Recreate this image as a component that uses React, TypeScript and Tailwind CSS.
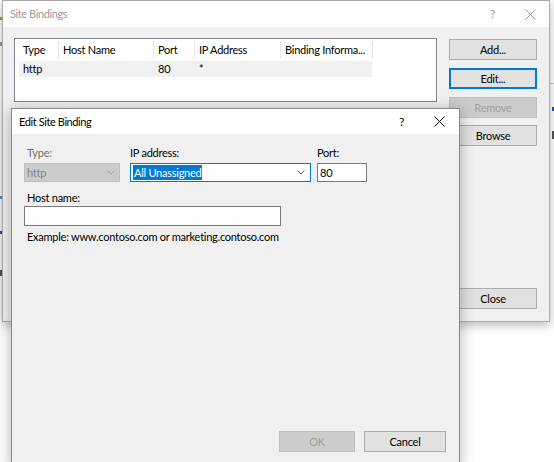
import React from "react";

function CloseX({ color }: { color: string }) {
  return (
    <svg width="11" height="11" viewBox="0 0 11 11" fill="none">
      <path d="M0.5 0.5 L10.5 10.5 M10.5 0.5 L0.5 10.5" stroke={color} strokeWidth="1" />
    </svg>
  );
}

function Chevron({ color }: { color: string }) {
  return (
    <svg width="8" height="5" viewBox="0 0 8 5" fill="none">
      <path d="M0.5 0.5 L4 4 L7.5 0.5" stroke={color} strokeWidth="1" />
    </svg>
  );
}

function WinButton({ label, variant = "normal", className = "" }: { label: string; variant?: "normal" | "default" | "disabled"; className?: string }) {
  const look =
    variant === "disabled"
      ? "bg-[#cccccc] border-[#bfbfbf] text-[#a0a0a0]"
      : variant === "default"
      ? "bg-[#e1e1e1] border-[#0078d7] shadow-[inset_0_0_0_1px_#0078d7] text-black"
      : "bg-[#e1e1e1] border-[#adadad] text-black";
  return (
    <div className={`h-[21px] flex items-center justify-center border ${look} ${className}`}>
      {label}
    </div>
  );
}

const columns = [
  { label: "Type", w: "w-[39px]" },
  { label: "Host Name", w: "w-[94px]" },
  { label: "Port", w: "w-[40px]" },
  { label: "IP Address", w: "w-[85px]" },
  { label: "Binding Informa...", w: "w-[91px]" },
];

const row = ["http", "", "80", "*", ""];

export default function App() {
  return (
    <div className="relative w-[554px] h-[462px] overflow-hidden bg-white text-[11px] leading-[14px] tracking-[-0.25px] text-black font-['Segoe_UI','Lato',sans-serif]">
      {/* bits of windows lying further behind */}
      <div className="absolute left-0 top-[17px] w-[2px] h-[3px] bg-[#d9822b]" />
      <div className="absolute left-0 top-[42px] w-[2px] h-[4px] bg-[#9a9a9a]" />
      <div className="absolute left-0 top-[196px] w-[2px] h-[3px] bg-[#5a8fc0]" />
      <div className="absolute left-0 top-[231px] w-[2px] h-[3px] bg-[#2a4f9a]" />
      <div className="absolute left-0 top-[270px] w-[2px] h-[6px] bg-[#555555]" />
      <div className="absolute left-[550px] top-[83px] w-[4px] h-px bg-[#c8c8c8]" />
      <div className="absolute left-[552px] top-[107px] w-[2px] h-[4px] bg-[#2a4f9a]" />
      <div className="absolute left-[552px] top-[131px] w-[2px] h-[8px] bg-[#555555]" />

      {/* Site Bindings (inactive) */}
      <div className="absolute left-[2px] top-0 w-[548px] h-[322px] flex flex-col bg-[#f0f0f0] border border-[#aaaaaa] shadow-[0_3px_10px_rgba(0,0,0,0.28)]">
        <div className="h-[26px] shrink-0 bg-white flex items-center pl-[7px] pr-[13px]">
          <span className="text-[#9a9a9a] text-[11px] tracking-[-0.4px]">Site Bindings</span>
          <span className="ml-auto text-[#9a9a9a] text-[12px] mr-[30px]">?</span>
          <CloseX color="#9a9a9a" />
        </div>
        <div className="flex-1 flex pl-[11px] pt-[11px] pb-[12px] gap-[12px]">
          <div className="w-[423px] h-[64px] bg-white border border-[#828790] pl-[4px] pt-[2px]">
            <div className="flex h-[18px] gap-px">
              {columns.map((c) => (
                <div key={c.label} className={`${c.w} bg-white pl-[4px] flex items-center whitespace-nowrap overflow-hidden shadow-[1px_0_0_#e5e5e5]`}>
                  {c.label}
                </div>
              ))}
            </div>
            <div className="flex h-[16px] mt-[2px] gap-px w-[353px] bg-[#f0f0f0]">
              {columns.map((c, i) => (
                <div key={c.label} className={`${c.w} pl-[4px] flex items-center`}>
                  {row[i]}
                </div>
              ))}
            </div>
          </div>
          <div className="w-[88px] flex flex-col pt-[1px]">
            <WinButton label="Add..." />
            <WinButton label="Edit..." variant="default" className="mt-[8px]" />
            <WinButton label="Remove" variant="disabled" className="mt-[8px]" />
            <WinButton label="Browse" className="mt-[7px]" />
            <WinButton label="Close" className="mt-auto" />
          </div>
        </div>
      </div>

      {/* Edit Site Binding (active) */}
      <div className="absolute left-[11px] top-[108px] w-[449px] h-[360px] flex flex-col bg-[#f0f0f0] border border-[#8a8a8a] shadow-[0_2px_14px_rgba(0,0,0,0.3)]">
        <div className="h-[25px] shrink-0 bg-white flex items-center pl-[7px] pr-[14px]">
          <span className="text-[11px] tracking-[-0.4px]">Edit Site Binding</span>
          <span className="ml-auto text-[12px] mr-[30px]">?</span>
          <CloseX color="#000000" />
        </div>
        <div className="flex-1 flex flex-col px-[12px] pt-[12px] pb-[15px]">
          <div className="flex">
            <div className="w-[96px] flex flex-col">
              <span className="pl-[3px] text-[#6d6d6d]">Type:</span>
              <div className="mt-[3px] h-[19px] bg-[#cccccc] border border-[#bfbfbf] flex items-center pl-[2px] pr-[4px] text-[#838383]">
                <span>http</span>
                <span className="ml-auto flex"><Chevron color="#a0a0a0" /></span>
              </div>
            </div>
            <div className="w-[181px] ml-[10px] flex flex-col">
              <span>IP address:</span>
              <div className="mt-[3px] h-[19px] bg-white border border-[#0078d7] flex items-center pl-[2px] pr-[5px]">
                <span className="bg-[#0078d7] text-white px-px leading-[15px]">All Unassigned</span>
                <span className="ml-auto flex"><Chevron color="#606060" /></span>
              </div>
            </div>
            <div className="w-[50px] ml-[6px] flex flex-col">
              <span>Port:</span>
              <div className="mt-[3px] h-[19px] bg-white border border-[#7a7a7a] flex items-center pl-[2px]">
                80
              </div>
            </div>
          </div>
          <span className="mt-[9px] pl-[3px]">Host name:</span>
          <div className="mt-px w-[257px] h-[20px] bg-white border border-[#7a7a7a]" />
          <span className="mt-[4px] pl-[3px]">Example: www.contoso.com or marketing.contoso.com</span>
          <div className="mt-auto flex justify-end gap-[9px] pr-px">
            <WinButton label="OK" variant="disabled" className="w-[76px]" />
            <WinButton label="Cancel" className="w-[82px]" />
          </div>
        </div>
      </div>
    </div>
  );
}
